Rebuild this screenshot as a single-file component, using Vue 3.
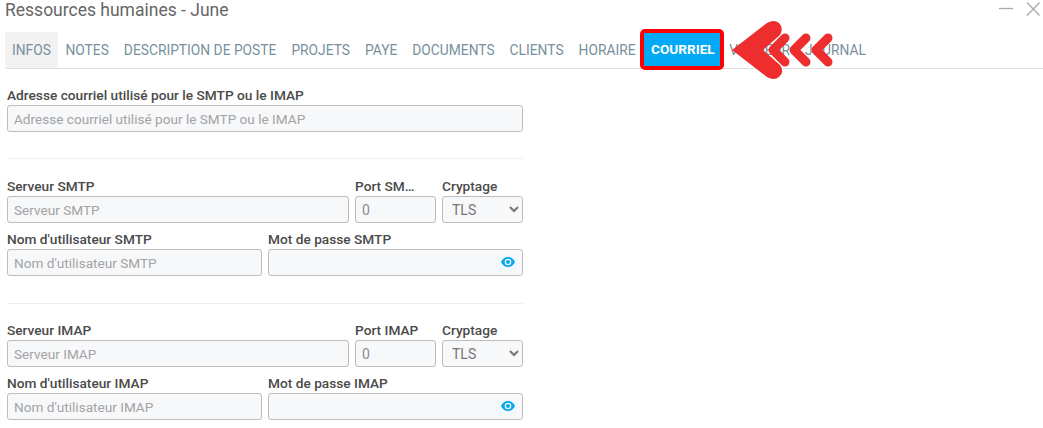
<script setup>
const tabs = ['INFOS','NOTES','DESCRIPTION DE POSTE','PROJETS','PAYE','DOCUMENTS','CLIENTS','HORAIRE','COURRIEL','VENDEUR','JOURNAL']
const sections = [
  { host:'Serveur SMTP', port:'Port SMTP', user:"Nom d'utilisateur SMTP", pass:'Mot de passe SMTP' },
  { host:'Serveur IMAP', port:'Port IMAP', user:"Nom d'utilisateur IMAP", pass:'Mot de passe IMAP' },
]
</script>

<template>
  <div class="page">
    <header class="head">
      <span class="title">Ressources humaines - June</span>
      <span class="wincontrols">
        <svg width="14" height="14" viewBox="0 0 14 14"><path d="M0 6.500H14" stroke="#aaa" stroke-width="1.3" fill="none"/></svg>
        <svg width="16" height="14" viewBox="0 0 16 14"><path d="M3 .5L15.500 13.500M15.500 .5L3 13.500" stroke="#aaa" stroke-width="1.3" fill="none"/></svg>
      </span>
    </header>
    <nav class="tabs">
      <a v-for="t in tabs" :key="t" class="tab" :class="{ on: t==='INFOS', mail: t==='COURRIEL' }">{{ t }}</a>
      <svg class="arrows" width="110" height="64" viewBox="730 19 110 64">
        <g fill="none" stroke="#ee2e2e" stroke-linecap="round" stroke-linejoin="round" stroke-width="9">
          <path d="M828 38L816 50L828 62"/>
          <path d="M806 38L794 50L806 62"/>
          <path d="M785 38L773 50L785 62"/>
        </g>
        <path d="M732 50L767 23Q774 19 779 23Q784 28 780 35L763 50L780 65Q785 72 779 77Q774 81 767 77Z" fill="#ee2e2e"/>
      </svg>
    </nav>
    <form class="form">
      <div class="field">
        <label>Adresse courriel utilisé pour le SMTP ou le IMAP</label>
        <input placeholder="Adresse courriel utilisé pour le SMTP ou le IMAP" />
      </div>
      <template v-for="(s, i) in sections" :key="s.host">
        <hr :class="{ second: i === 1 }" />
        <div class="row top">
          <div class="field"><label>{{ s.host }}</label><input :placeholder="s.host" /></div>
          <div class="field port"><label>{{ s.port }}</label><input placeholder="0" /></div>
          <div class="field crypt"><label>Cryptage</label><select><option>TLS</option></select></div>
        </div>
        <div class="row half">
          <div class="field"><label>{{ s.user }}</label><input :placeholder="s.user" /></div>
          <div class="field pass">
            <label>{{ s.pass }}</label>
            <input type="password" />
            <svg class="eye" width="14" height="10" viewBox="0 0 14 10"><path fill="#03a9f4" d="M7 0C4 0 1.500 1.800 0 5c1.500 3.200 4 5 7 5s5.500-1.800 7-5C12.500 1.800 10 0 7 0zm0 8.300A3.300 3.300 0 1 1 7 1.700a3.300 3.300 0 0 1 0 6.600zM7 3a2 2 0 1 0 0 4 2 2 0 0 0 0-4z"/></svg>
          </div>
        </div>
      </template>
    </form>
  </div>
</template>

<style scoped>
.page { width:1043px; height:428px; overflow:hidden; background:#fff; font-family:Roboto,sans-serif; }
.head { height:32px; display:flex; justify-content:space-between; padding:0 2px 0 5px; }
.title { font-size:17.500px; line-height:21px; color:#666; }
.wincontrols { display:flex; gap:11px; padding-top:2px; height:14px; margin-right:1px; }
.tabs { position:relative; height:36px; margin-left:5px; display:flex; border-bottom:1px solid #e0e0e0; font-size:13.800px; color:#78909c; }
.tab { padding:0 7.500px; line-height:36px; white-space:nowrap; }
.tab.on { background:#f2f2f2; padding:0 7px; }
.tab.mail { background:#03a9f4; color:#fff; font-weight:700; font-size:13.600px; outline:4.500px solid #f00; height:33px; line-height:33px; margin:1px 2px 0 1px; padding:0 5px 0 7px; border-radius:1px; }
.arrows { position:absolute; left:725px; top:-13px; }
.form { width:516px; margin-left:7px; padding-top:17px; }
.field { position:relative; display:flex; flex-direction:column; min-width:0; }
label { font-size:13.700px; font-weight:500; color:#4a4a4a; line-height:18px; white-space:nowrap; overflow:hidden; text-overflow:ellipsis; height:18px; margin-bottom:1px; }
input, select { box-sizing:border-box; width:100%; height:27px; border:1px solid #bdbdbd; border-radius:3px; background:#f7f8fa; padding:0 6px; font:13.600px Roboto,sans-serif; color:#757575; outline:0; margin:0; }
input::placeholder { color:#a3a3a3; opacity:1; }
select { padding:0 5px; font-size:14px; }
.port input::placeholder { color:#8a8a8a; font-size:14px; }
.port label { max-width:64px; }
hr { border:0; border-top:1px solid #eee; margin:26px 0 18px; }
hr.second { margin:27px 0 17px; }
.row { display:flex; gap:6px; }
.top .field:first-child { flex:1; }
.port { width:81px; }
.crypt { width:81px; }
.half { margin-top:7px; }
.half .field { width:255px; }
.eye { position:absolute; right:8px; top:27px; }
</style>
